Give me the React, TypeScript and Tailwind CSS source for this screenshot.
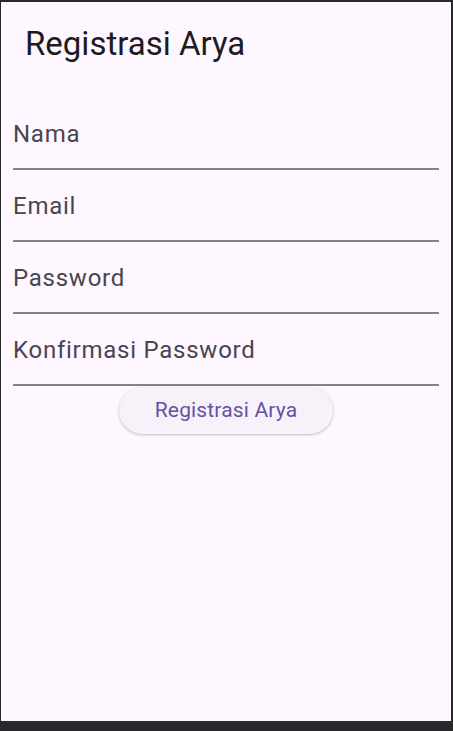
import React from "react";

const fields = ["Nama", "Email", "Password", "Konfirmasi Password"];

const App = () => {
  return (
    <div className="h-[731px] w-full bg-[#28292b] pl-px pt-[2px] pr-[2px] pb-[10px] font-['Roboto',sans-serif]">
      <div className="flex h-full flex-col bg-[#fef7ff]">
        <header className="h-[96px] pl-[24px] pt-[22px]">
          <h1 className="text-[33px] leading-[39px] font-normal text-[#1d1b20]">
            Registrasi Arya
          </h1>
        </header>

        <form className="flex flex-col px-[12px]" onSubmit={(e) => e.preventDefault()}>
          {fields.map((label) => (
            <div
              key={label}
              className="h-[72px] border-b-2 border-[#86818b] pt-[22px]"
            >
              <span className="block text-[24px] leading-[28px] tracking-[0.75px] text-[#49454f]">
                {label}
              </span>
            </div>
          ))}

          <div className="mt-px flex justify-center">
            <button
              type="submit"
              className="h-[47px] w-[214px] rounded-full bg-[#f7f2fa] text-[21px] tracking-[0.15px] text-[#6750a4] shadow-[0_1px_3px_rgba(0,0,0,0.25)]"
            >
              Registrasi Arya
            </button>
          </div>
        </form>
      </div>
    </div>
  );
};

export default App;
